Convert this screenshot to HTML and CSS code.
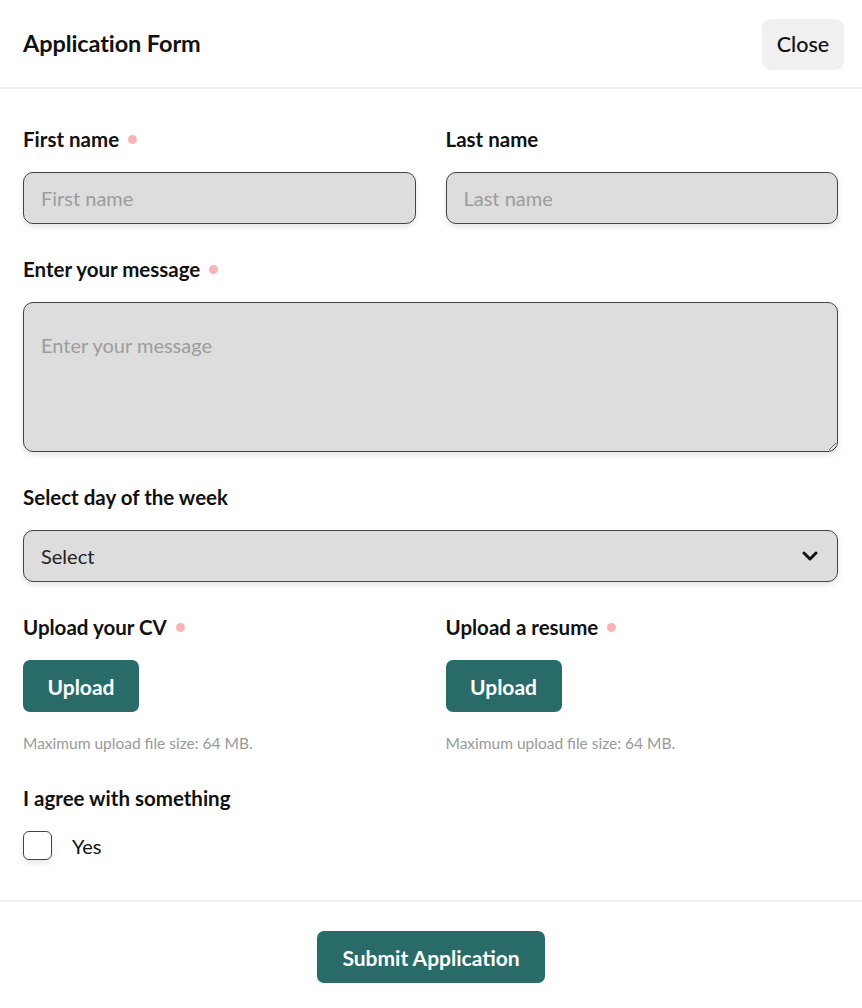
FILE: index.html
```html
<!DOCTYPE html>
<html lang="en">
<head>
<meta charset="utf-8">
<title>Application Form</title>
<link rel="stylesheet" href="styles.css">
</head>
<body>
<div class="modal">
  <header class="modal-header">
    <h1 class="title">Application Form</h1>
    <button class="btn-close" type="button">Close</button>
  </header>
  <form class="modal-body">
    <div class="row">
      <div class="field">
        <label class="label">First name <span class="req"></span></label>
        <input class="control" type="text" placeholder="First name">
      </div>
      <div class="field">
        <label class="label">Last name</label>
        <input class="control" type="text" placeholder="Last name">
      </div>
    </div>
    <div class="field">
      <label class="label">Enter your message <span class="req"></span></label>
      <textarea class="control textarea" placeholder="Enter your message"></textarea>
    </div>
    <div class="field">
      <label class="label">Select day of the week</label>
      <div class="select-wrap">
        <select class="control select">
          <option>Select</option>
          <option>Monday</option>
          <option>Tuesday</option>
        </select>
        <svg class="chevron" width="16" height="12" viewBox="0 0 16 12"><path d="M2 3 L8 9 L14 3" fill="none" stroke="#111" stroke-width="3" stroke-linecap="round" stroke-linejoin="round"/></svg>
      </div>
    </div>
    <div class="row">
      <div class="field">
        <label class="label">Upload your CV <span class="req"></span></label>
        <div class="upload">
          <button class="btn-primary btn-upload" type="button">Upload</button>
          <p class="hint">Maximum upload file size: 64 MB.</p>
        </div>
      </div>
      <div class="field">
        <label class="label">Upload a resume <span class="req"></span></label>
        <div class="upload">
          <button class="btn-primary btn-upload" type="button">Upload</button>
          <p class="hint">Maximum upload file size: 64 MB.</p>
        </div>
      </div>
    </div>
    <div class="field">
      <span class="label">I agree with something</span>
      <label class="check">
        <span class="box"></span>
        <span class="check-text">Yes</span>
      </label>
    </div>
  </form>
  <footer class="modal-footer">
    <button class="btn-primary btn-submit" type="button">Submit Application</button>
  </footer>
</div>
</body>
</html>
```
FILE: styles.css
```css
* { box-sizing: border-box; }
html, body { margin: 0; padding: 0; background: #fff; }
body {
  font-family: Lato, "Liberation Sans", sans-serif;
  color: #111;
  width: 862px;
}
.modal { display: flex; flex-direction: column; }
.modal-header {
  height: 89px;
  display: flex;
  align-items: center;
  justify-content: space-between;
  padding: 0 18px 0 23px;
  border-bottom: 2px solid #eeeeee;
}
.title {
  margin: 0;
  font-size: 23.5px;
  font-weight: 700;
  letter-spacing: -0.1px;
  padding-bottom: 2px;
}
.btn-close {
  width: 82px;
  height: 51px;
  border: none;
  border-radius: 9px;
  background: #f0f0f0;
  font-family: inherit;
  font-size: 21.5px;
  font-weight: 500;
  color: #111;
  margin-top: 1px;
}
.modal-body {
  display: flex;
  flex-direction: column;
  gap: 32px;
  padding: 37px 24px 40px 23px;
  border-bottom: 2px solid #eeeeee;
}
.row {
  display: grid;
  grid-template-columns: 1fr 1fr;
  column-gap: 30px;
}
.field { display: flex; flex-direction: column; gap: 20px; }
.label {
  display: flex;
  align-items: center;
  gap: 9px;
  font-size: 20.5px;
  font-weight: 700;
  line-height: 26px;
  height: 26px;
}
.req {
  width: 9px;
  height: 9px;
  border-radius: 50%;
  background: #f8b4b4;
  display: inline-block;
}
.control {
  width: 100%;
  height: 52px;
  border: 1.5px solid #444;
  border-radius: 10px;
  background: #dddddd;
  box-shadow: 0 3px 6px rgba(0,0,0,0.10);
  font-family: inherit;
  font-size: 20px;
  color: #222;
  padding: 0 17px;
  outline: none;
}
.control::placeholder { color: #9c9c9c; }
.textarea {
  height: 150px;
  padding: 30px 17px 10px;
  line-height: 24px;
  resize: vertical;
  display: block;
}
.select-wrap { position: relative; }
.select {
  appearance: none;
  -webkit-appearance: none;
  color: #222;
}
.chevron {
  position: absolute;
  right: 20px;
  top: 20px;
  pointer-events: none;
}
.upload { display: flex; flex-direction: column; align-items: flex-start; gap: 21px; }
.btn-primary {
  border: none;
  border-radius: 7px;
  background: #296b68;
  color: #fff;
  font-family: inherit;
  font-weight: 700;
  font-size: 21px;
  height: 52px;
}
.btn-upload { width: 116px; }
.hint {
  margin: 0;
  font-size: 15.5px;
  line-height: 20px;
  color: #999;
}
.check { display: flex; align-items: center; gap: 20px; }
.box {
  width: 29px;
  height: 29px;
  border: 1.5px solid #444;
  border-radius: 6px;
  background: #fff;
  box-shadow: 0 3px 6px rgba(0,0,0,0.10);
}
.check-text { font-size: 20px; }
.modal-footer {
  display: flex;
  justify-content: center;
  padding: 29px 0 25px;
}
.btn-submit { width: 228px; }
```
